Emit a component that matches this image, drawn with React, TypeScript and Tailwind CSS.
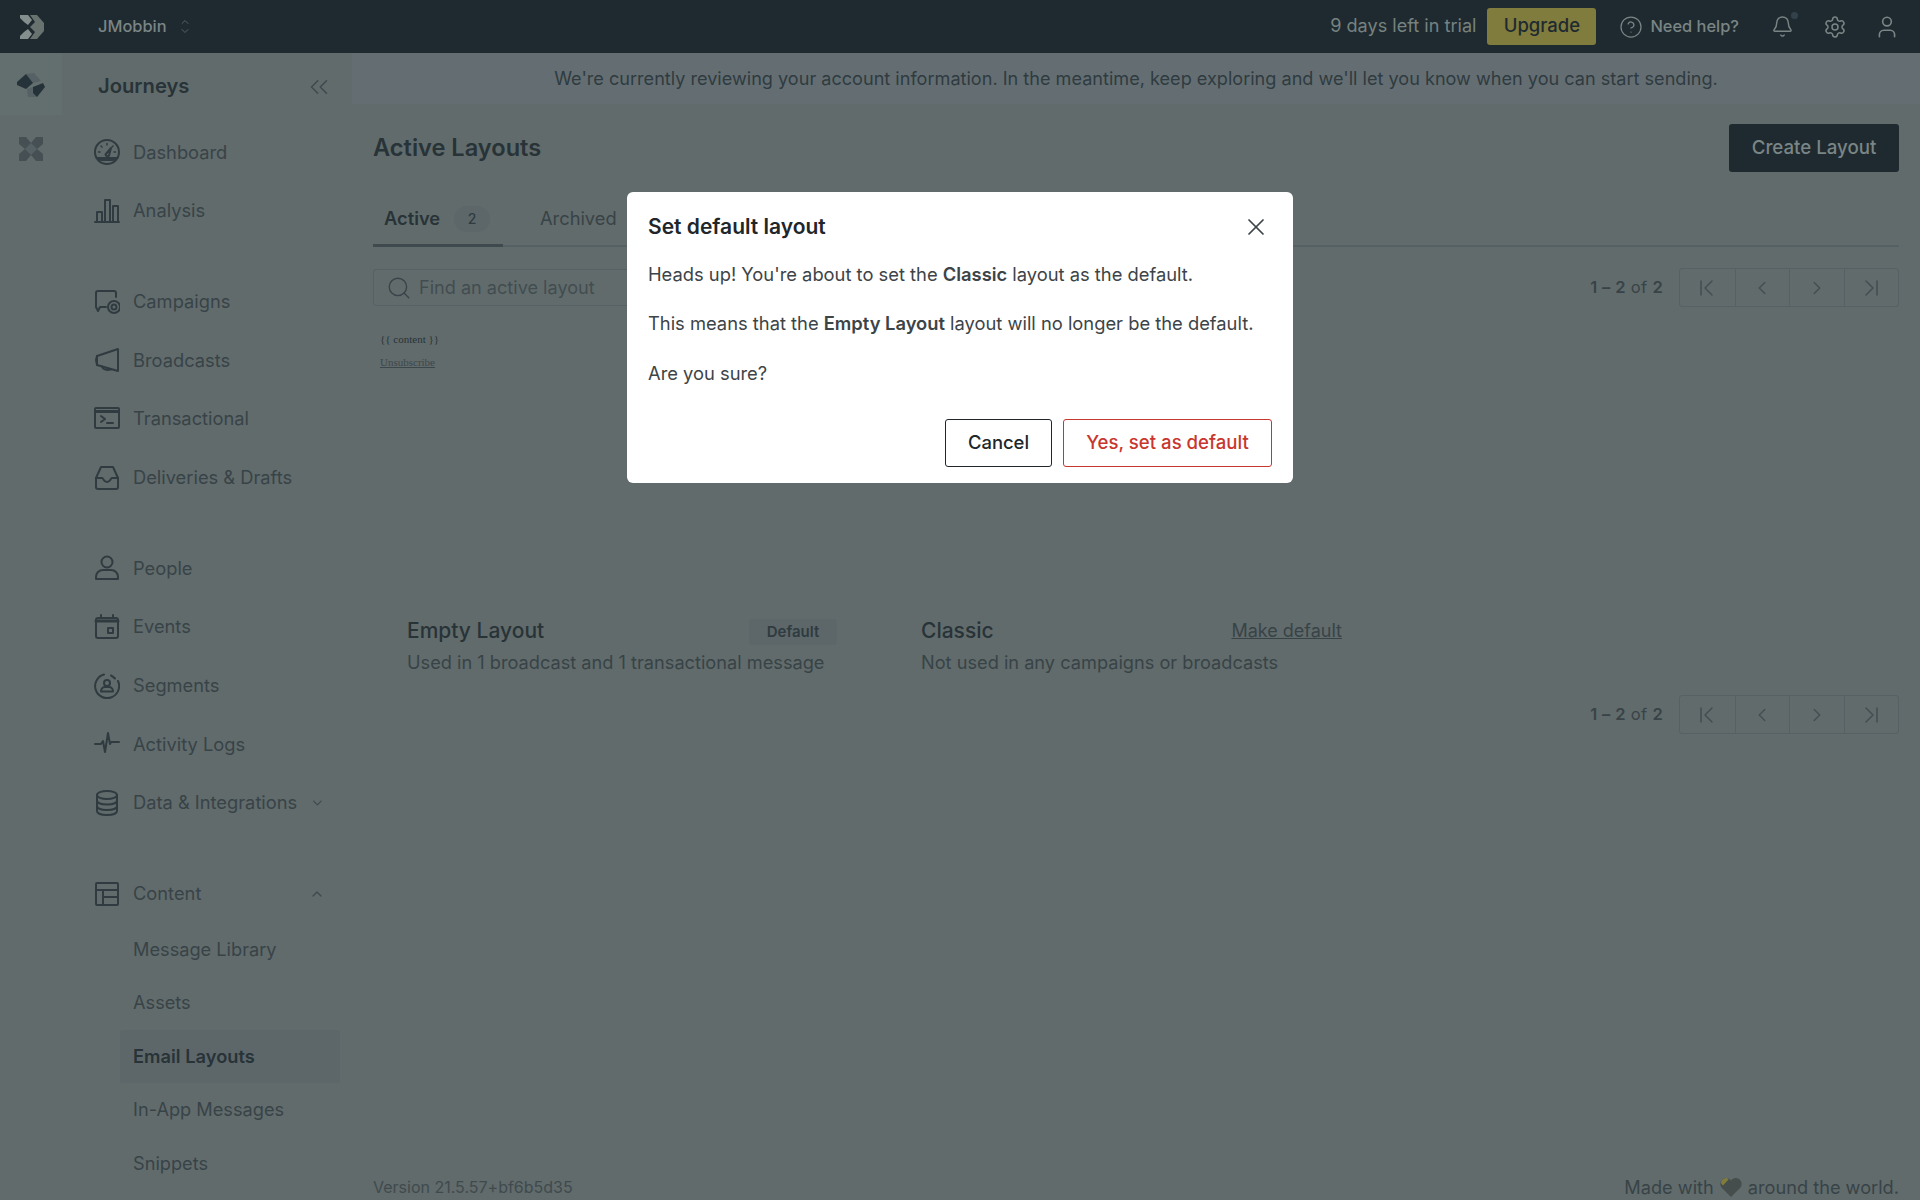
import React from 'react';
import { ChevronDown, ChevronUp, ChevronLeft, ChevronRight, ChevronsLeft, X, Search, CircleHelp, Bell, Settings, User } from 'lucide-react';

const stroke = { fill: 'none', stroke: 'currentColor', strokeWidth: 2, strokeLinecap: 'round', strokeLinejoin: 'round' } as const;

function Glyph({ children }: { children: React.ReactNode }) {
  return (
    <svg viewBox="0 0 26 26" className="w-[26px] h-[26px] shrink-0 text-[#2f3b40]" {...stroke}>
      {children}
    </svg>
  );
}

const icons: Record<string, React.ReactNode> = {
  dashboard: (
    <>
      <circle cx="13" cy="13" r="12" />
      <path d="M2.5 19h21M4 20.5c4 .5 14 .5 18 0" />
      <path d="M11.5 15.5l5.5-6.5-2 7.5a2 2 0 0 1-3.5-1z" />
      <path d="M13 4.5v1.5M7 7l1 1M19 7l-1 1M4.5 13H6M20 13h1.5" strokeWidth="1.5" />
    </>
  ),
  analysis: (
    <>
      <path d="M1 24h24" />
      <rect x="3" y="14" width="5" height="10" />
      <rect x="11" y="2" width="5" height="22" />
      <rect x="19" y="8" width="5" height="16" />
    </>
  ),
  campaigns: (
    <>
      <path d="M12 18H6l-2 4-2-4V4a2 2 0 0 1 2-2h16a2 2 0 0 1 2 2v4" />
      <circle cx="20" cy="18" r="6" />
      <circle cx="20" cy="18" r="2.5" />
    </>
  ),
  broadcasts: (
    <>
      <path d="M24 2v22L3 18V9z" />
      <path d="M3 9l-1 4 1 5M8 19.5c1 3 4 4 9 3" />
    </>
  ),
  transactional: (
    <>
      <rect x="1" y="2" width="24" height="20" rx="1" />
      <path d="M1 5.5h24" strokeWidth="3" />
      <path d="M7 10l4 3-4 3M13 17h6" />
    </>
  ),
  deliveries: (
    <>
      <path d="M7 2h12l5 11v9a2 2 0 0 1-2 2H4a2 2 0 0 1-2-2v-9z" />
      <path d="M2 13h6c1.500 0 1.500 4 5 4s3.500-4 5-4h6" />
    </>
  ),
  people: (
    <>
      <circle cx="13" cy="7" r="5.500" />
      <path d="M2 24v-2c0-4 3-7 7-7h8c4 0 7 3 7 7v2z" />
    </>
  ),
  events: (
    <>
      <rect x="2" y="4" width="22" height="20" rx="2" />
      <path d="M2 7h22" strokeWidth="3" />
      <path d="M7 1v3M19 1v3" />
      <rect x="14" y="14" width="5" height="5" />
    </>
  ),
  segments: (
    <>
      <path d="M10 1.500A12 12 0 1 0 24 8" />
      <path d="M17 2.500a12 12 0 0 1 4 3" />
      <circle cx="13" cy="10" r="3" />
      <path d="M7 18.500c0-3 2-4.500 4-4.500h4c2 0 4 1.500 4 4.500z" />
    </>
  ),
  activity: <path d="M1 13h6l2-3 2 11 3-19 2 11 1-2h8" />,
  data: (
    <>
      <ellipse cx="13" cy="5" rx="10" ry="4" />
      <path d="M3 5v16c0 2.500 4.500 4 10 4s10-1.500 10-4V5" />
      <path d="M3 10.500c0 2.500 4.500 4 10 4s10-1.500 10-4M3 16c0 2.500 4.500 4 10 4s10-1.500 10-4" />
    </>
  ),
  content: (
    <>
      <rect x="2" y="2" width="22" height="22" rx="1" />
      <path d="M2 9h22M9 9v15M9 16h15" />
    </>
  ),
};

type NavRow = { label: string; icon: string; chevron?: 'up' | 'down' };

const navGroups: NavRow[][] = [
  [
    { label: 'Dashboard', icon: 'dashboard' },
    { label: 'Analysis', icon: 'analysis' },
  ],
  [
    { label: 'Campaigns', icon: 'campaigns' },
    { label: 'Broadcasts', icon: 'broadcasts' },
    { label: 'Transactional', icon: 'transactional' },
    { label: 'Deliveries & Drafts', icon: 'deliveries' },
  ],
  [
    { label: 'People', icon: 'people' },
    { label: 'Events', icon: 'events' },
    { label: 'Segments', icon: 'segments' },
    { label: 'Activity Logs', icon: 'activity' },
    { label: 'Data & Integrations', icon: 'data', chevron: 'down' },
  ],
  [{ label: 'Content', icon: 'content', chevron: 'up' }],
];

const subItems = ['Message Library', 'Assets', 'Email Layouts', 'In-App Messages', 'Snippets'];

function Pagination() {
  const cell = 'w-[54.5px] h-[37px] flex items-center justify-center border-l border-[#566165] first:border-l-0 text-[#434e53]';
  return (
    <div className="flex items-center gap-[16px]">
      <span className="text-[16.5px] tracking-[0.02em] text-[#384348]">
        <b className="font-semibold">1 – 2</b> of <b className="font-semibold">2</b>
      </span>
      <div className="flex rounded-[3px] border border-[#566165]">
        <div className={cell}>
          <svg viewBox="0 0 20 20" className="w-5 h-5" {...stroke} strokeWidth="1.5"><path d="M4 3v14M15 3l-7 7 7 7" /></svg>
        </div>
        <div className={cell}><ChevronLeft size={22} strokeWidth={1.5} /></div>
        <div className={cell}><ChevronRight size={22} strokeWidth={1.5} /></div>
        <div className={cell}>
          <svg viewBox="0 0 20 20" className="w-5 h-5" {...stroke} strokeWidth="1.5"><path d="M16 3v14M5 3l7 7-7 7" /></svg>
        </div>
      </div>
    </div>
  );
}

export default function App() {
  return (
    <div className="relative h-[1200px] w-[1920px] overflow-hidden flex flex-col bg-[#616b6b] font-[Inter,sans-serif] text-[#2f3b40]">
      <header className="h-[53px] shrink-0 bg-[#1f2a30] flex items-center text-[#7a8585]">
        <div className="w-[98px] pl-[20px] shrink-0">
          <svg viewBox="0 0 24 24" className="w-6 h-6">
            <path d="M0 0h8l4 5-4 5-4-3-4-4zM0 24h8l4-5-4-5-4 3-4 4z" fill="#848e8c" />
            <path d="M10 0h7l7 8v8l-7 8h-7l5-7 -5-5 5-5z" fill="#68726f" />
          </svg>
        </div>
        <span className="text-[16.4px] font-medium">JMobbin</span>
        <div className="ml-[12px] flex flex-col -space-y-[3px] text-[#566165]">
          <ChevronUp size={12} />
          <ChevronDown size={12} />
        </div>
        <div className="ml-auto flex items-center">
          <span className="-mt-[2px] text-[18.1px] text-[#76827f]">9 days left in trial</span>
          <div className="ml-[11px] w-[109px] h-[37px] -mt-[1px] flex items-center justify-center rounded-[3px] bg-[#7f7c3e] text-[18.5px] font-medium text-[#1f2a30]">Upgrade</div>
          <CircleHelp size={24} strokeWidth={1.25} className="ml-[23px]" />
          <span className="ml-[7px] text-[16.4px] font-medium">Need help?</span>
          <div className="relative ml-[32px]">
            <Bell size={23} strokeWidth={1.5} />
            <span className="absolute -top-[3px] right-[-4px] w-[7px] h-[7px] rounded-full bg-[#33424a]" />
          </div>
          <Settings size={24} strokeWidth={1.5} className="ml-[29px]" />
          <User size={26} strokeWidth={1.5} className="ml-[27px] mr-[20px]" />
        </div>
      </header>

      <div className="flex flex-1 min-h-0">
        <aside className="w-[62px] shrink-0">
          <div className="h-[62px] bg-[#636e6e] flex items-center justify-center pt-[2px]">
            <svg viewBox="0 0 28 24" className="w-[28px] h-6">
              <path d="M9 1l8-1 7 8-8 2z" fill="#566165" />
              <path d="M0 9l9-8 7 9-7 6-9-4z" fill="#26323a" />
              <path d="M10 16l6-2 4 10h-9z" fill="#566165" />
              <path d="M16 14l10-4 2 4-8 10-4-4z" fill="#26323a" />
            </svg>
          </div>
          <div className="mt-[22px] flex justify-center">
            <svg viewBox="0 0 24 24" className="w-6 h-6">
              <path d="M0 0h7l5 6 5-6h7v7l-6 5 6 5v7h-7l-5-6-5 6H0v-7l6-5-6-5z" fill="#454f54" />
              <path d="M12 6l6 6-6 6-6-6z" fill="#566165" />
            </svg>
          </div>
        </aside>

        <nav className="w-[290px] shrink-0 bg-[#616b6b]">
          <div className="h-[62px] pt-[5px] pl-[36px] pr-[18px] flex items-center justify-between">
            <h2 className="text-[20.2px] font-semibold text-[#283338]">Journeys</h2>
            <ChevronsLeft size={30} strokeWidth={1.25} className="text-[#3f4a4f]" />
          </div>
          <div className="mt-[8px] flex flex-col gap-[32px]">
            {navGroups.map((group, i) => (
              <ul key={i}>
                {group.map((row) => (
                  <li key={row.label} className="h-[58.67px] flex items-center pl-[32px] pr-[27px] gap-[13px] whitespace-nowrap text-[18.3px] text-[#384348]">
                    <Glyph>{icons[row.icon]}</Glyph>
                    <span>{row.label}</span>
                    {row.chevron === 'down' && <ChevronDown size={16} className="ml-auto text-[#3f4a4f]" />}
                    {row.chevron === 'up' && <ChevronUp size={16} className="ml-auto text-[#3f4a4f]" />}
                  </li>
                ))}
              </ul>
            ))}
          </div>
          <ul className="pl-[58px] pr-[12px]">
            {subItems.map((item) => (
              <li
                key={item}
                className={
                  item === 'Email Layouts'
                    ? 'h-[53.5px] pl-[13px] flex items-center rounded-[3px] bg-[#5d676a] text-[18.3px] font-semibold text-[#283338]'
                    : 'h-[53.5px] pl-[13px] flex items-center text-[18.2px] text-[#384348]'
                }
              >
                {item}
              </li>
            ))}
          </ul>
        </nav>

        <main className="flex-1 min-w-0 flex flex-col">
          <div className="h-[51px] shrink-0 bg-[#646e72] flex items-center justify-center text-[18.1px] text-[#2f3b40]">
            We're currently reviewing your account information. In the meantime, keep exploring and we'll let you know when you can start sending.
          </div>

          <div className="flex-1 flex flex-col px-[21px]">
            <div className="mt-[20px] flex items-center justify-between">
              <h1 className="text-[23.6px] font-semibold text-[#283338]">Active Layouts</h1>
              <div className="w-[170px] h-[48px] flex items-center justify-center rounded-[3px] bg-[#1f2a30] text-[18.7px] font-medium text-[#7a8585]">Create Layout</div>
            </div>

            <div className="mt-[26px] h-[49px] flex border-b-2 border-[#566165]">
              <div className="relative w-[130px] pl-[11px] flex items-center gap-[14px] pb-[6px]">
                <span className="text-[18.3px] font-semibold text-[#283338]">Active</span>
                <span className="w-[36px] h-[26px] flex items-center justify-center rounded-full bg-[#5d676a] text-[14px] font-medium">2</span>
                <span className="absolute left-0 right-0 -bottom-[2px] h-[3px] bg-[#3f4a4f]" />
              </div>
              <div className="ml-[37px] flex items-center pb-[6px] text-[18.3px] text-[#384347]">Archived</div>
            </div>

            <div className="mt-[21px] flex items-center justify-between">
              <div className="w-[400px] h-[37px] flex items-center gap-[7px] pl-[12px] rounded-[3px] border border-[#566165]">
                <Search size={26} strokeWidth={1.25} className="text-[#38434a]" />
                <span className="text-[18.1px] text-[#424d51]">Find an active layout</span>
              </div>
              <Pagination />
            </div>

            <div className="mt-[21px] flex gap-[33px]">
              {[
                { name: 'Empty Layout', note: 'Used in 1 broadcast and 1 transactional message', tag: true },
                { name: 'Classic', note: 'Not used in any campaigns or broadcasts', tag: false },
              ].map((card) => (
                <section key={card.name} className="w-[481px] h-[348px] flex flex-col">
                  <div className="h-[289px] pl-[7px] pt-[3px] font-['Liberation_Serif',serif] text-[11px] text-[#283338]">
                    {card.tag && (
                      <>
                        <p>{'{{ content }}'}</p>
                        <p className="mt-[6px] underline text-[#3c474c]">Unsubscribe</p>
                      </>
                    )}
                  </div>
                  <div className="flex items-center justify-between pl-[34px] pr-[17px] h-[32px]">
                    <span className="text-[21px] font-medium text-[#283338]">{card.name}</span>
                    {card.tag ? (
                      <span className="w-[88px] h-[26px] mt-[4px] flex items-center justify-center rounded-[3px] bg-[#5d676a] text-[15px] font-semibold">Default</span>
                    ) : (
                      <span className="text-[18px] underline text-[#384348] mr-[9px] mt-[1px]">Make default</span>
                    )}
                  </div>
                  <p className="mt-[2.5px] pl-[34px] text-[18.2px] text-[#384347]">{card.note}</p>
                </section>
              ))}
            </div>

            <div className="mt-[19px] flex justify-end">
              <Pagination />
            </div>

            <footer className="mt-auto -mb-px flex items-center justify-between text-[#3f4a4e]">
              <span className="text-[16px]">Version 21.5.57+bf6b5d35</span>
              <span className="flex items-center gap-[5px] text-[18.2px] text-[#384348]">
                Made with
                <svg viewBox="0 0 24 22" className="w-[24px] h-[21px]">
                  <path d="M12 21L2 11C-1 7 2 1 7 1c2 0 4 1 5 3 1-2 3-3 5-3 5 0 8 6 5 10z" fill="#464d4d" />
                  <path d="M6 1.200C3.500 1.500 1.500 3.500 1.500 6.500L3.500 9 9.500 2.500C8.500 1.500 7.500 1 6 1.200z" fill="#7f7c3e" />
                </svg>
                around the world.
              </span>
            </footer>
          </div>
        </main>
      </div>

      <div className="absolute inset-0 flex justify-center pt-[192px]">
        <div role="dialog" className="w-[666px] h-[291px] rounded-[6px] bg-white pl-[21px] pr-[21px] text-[18.33px] text-[#3d4448]">
          <div className="h-[69px] flex items-center justify-between">
            <h3 className="text-[21px] font-semibold text-[#20262a]">Set default layout</h3>
            <X size={28} strokeWidth={1.5} className="mr-[2px] text-[#3d4448]" />
          </div>
          <div className="mt-[1.5px] flex flex-col gap-[27.5px] leading-[22px]">
            <p>Heads up! You're about to set the <b className="font-semibold">Classic</b> layout as the default.</p>
            <p>This means that the <b className="font-semibold">Empty Layout</b> layout will no longer be the default.</p>
            <p>Are you sure?</p>
          </div>
          <div className="mt-[35px] flex justify-end gap-[11px]">
            <button className="w-[107px] h-[48px] rounded-[3px] border border-[#20262a] text-[18.4px] font-medium text-[#20262a]">Cancel</button>
            <button className="w-[209px] h-[48px] rounded-[3px] border border-[#c8372f] text-[18.6px] font-medium text-[#c8372f]">Yes, set as default</button>
          </div>
        </div>
      </div>
    </div>
  );
}
